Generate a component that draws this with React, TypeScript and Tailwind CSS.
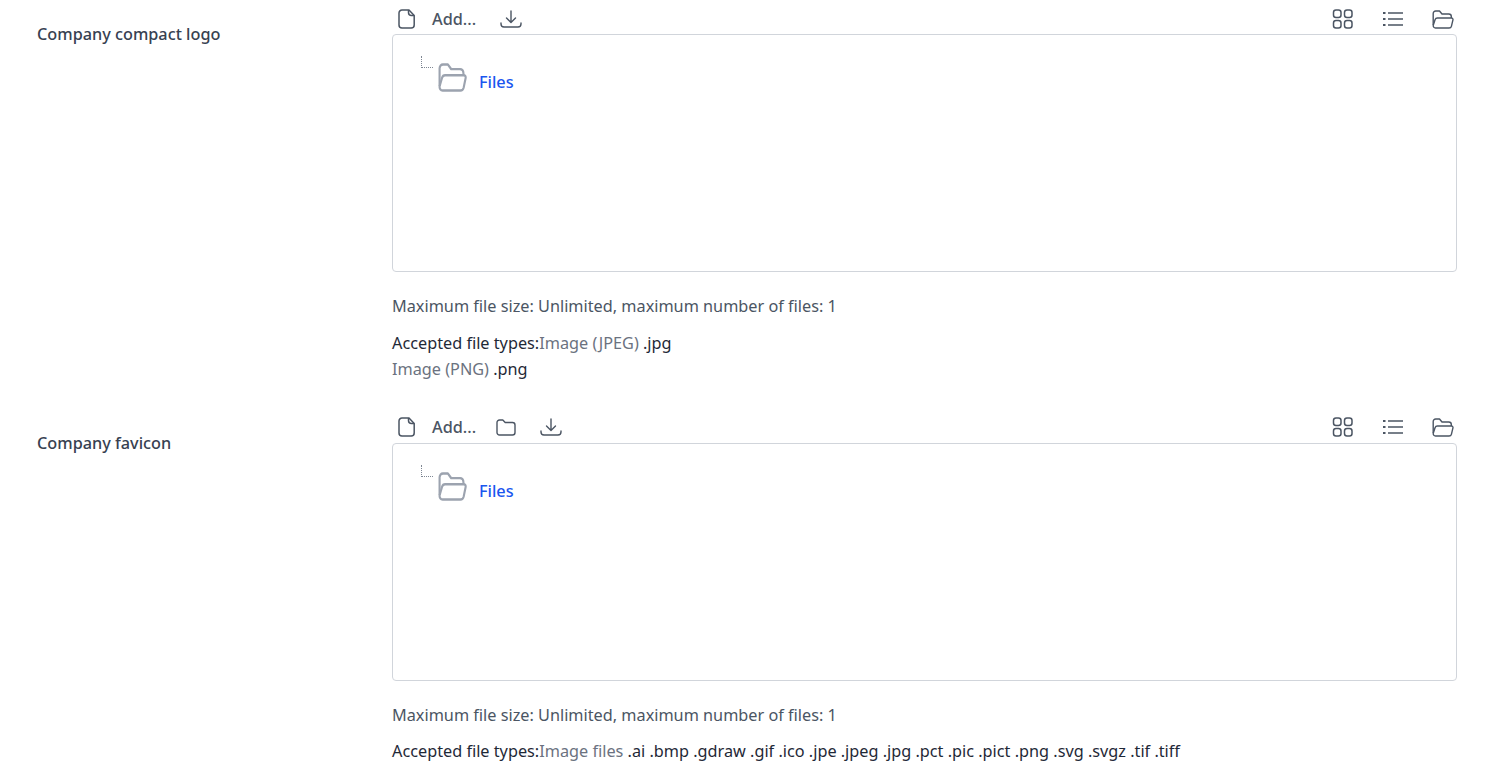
import React from "react";

const FileIcon = () => (
  <svg width="18" height="20" viewBox="0 0 18 20" fill="none" stroke="#4b5563" strokeWidth="1.5" strokeLinejoin="round">
    <path d="M4 1h7l5.200 5.500V16a3 3 0 0 1-3 3H4a3 3 0 0 1-3-3V4a3 3 0 0 1 3-3Z" />
    <path d="M10.500 1v2.500a3 3 0 0 0 3 3h2.700" />
  </svg>
);
const DownloadIcon = () => (
  <svg width="22" height="18" viewBox="0 0 22 18" fill="none" stroke="#4b5563" strokeWidth="1.4" strokeLinecap="round" strokeLinejoin="round">
    <path d="M11 1v11M6.500 8 11 12.500 15.500 8" />
    <path d="M1 13v1a3 3 0 0 0 3 3h14a3 3 0 0 0 3-3v-1" />
  </svg>
);
const FolderIcon = () => (
  <svg width="20" height="17" viewBox="0 0 20 17" fill="none" stroke="#4b5563" strokeWidth="1.4" strokeLinejoin="round">
    <path d="M1 3.500A2.500 2.500 0 0 1 3.500 1h3.300l2.400 2.500h7.300a2.500 2.500 0 0 1 2.500 2.500v7.500a2.500 2.500 0 0 1-2.500 2.500h-13A2.500 2.500 0 0 1 1 13.500Z" />
  </svg>
);
const GridIcon = () => (
  <svg width="22" height="20" viewBox="0 0 22 20" fill="none" stroke="#4b5563" strokeWidth="1.500">
    <rect x="1.500" y="1" width="7.500" height="7.500" rx="2.500" />
    <rect x="12.500" y="1" width="7.500" height="7.500" rx="2.500" />
    <rect x="1.500" y="11.500" width="7.500" height="7.500" rx="2.500" />
    <rect x="12.500" y="11.500" width="7.500" height="7.500" rx="2.500" />
  </svg>
);
const ListIcon = () => (
  <svg width="20" height="16" viewBox="0 0 20 16" fill="none" stroke="#4b5563" strokeWidth="1.600">
    <path d="M5 2h15M5 8h15M5 14h15" />
    <path d="M0 2h2.500M0 8h2.500M0 14h2.500" strokeWidth="2.200" />
  </svg>
);
const OpenFolder = ({ w, h, color, sw }: { w: number; h: number; color: string; sw: number }) => (
  <svg width={w} height={h} viewBox="0 0 22 19" preserveAspectRatio="none" fill="none" stroke={color} strokeWidth={sw} strokeLinejoin="round">
    <path d="M1.200 15V3.500A2.500 2.500 0 0 1 3.700 1h3.800l2.500 3h6.800a2.500 2.500 0 0 1 2.500 2.500V8" />
    <path d="M5.500 8h14a1.500 1.500 0 0 1 1.450 1.900l-1.500 6.300A2.500 2.500 0 0 1 17 18H3.500a2.300 2.300 0 0 1-2.250-2.800l1.800-5.500A2.500 2.500 0 0 1 5.500 8Z" />
  </svg>
);

function Uploader({ folderBtn, meta }: { folderBtn?: boolean; meta: React.ReactNode }) {
  return (
    <div className="w-[1065px]">
      <div className={`flex items-center justify-between pl-[6px] pr-[3px] h-[20px] ${folderBtn ? "mb-[6px]" : "mb-[5px]"}`}>
        <div className="flex items-center">
          <FileIcon />
          <span className="ml-[16px] text-[#4b5563] leading-5 font-medium">Add...</span>
          {folderBtn && (
            <span className="ml-[20px] flex">
              <FolderIcon />
            </span>
          )}
          <span className="ml-[24px] flex">
            <DownloadIcon />
          </span>
        </div>
        <div className="flex items-center gap-[29px]">
          <GridIcon />
          <ListIcon />
          <OpenFolder w={22} h={19} color="#4b5563" sw={1.4} />
        </div>
      </div>
      <div className="h-[238px] border border-[#d1d5db] rounded-[4px] bg-white pl-[28px] pt-[20px]">
        <div className="flex items-start">
          <span className="w-[12px] h-[12px] mt-[1px] border-l border-b border-dotted border-[#7f8793]" />
          <span className="ml-[5px] mt-[8px] flex">
            <OpenFolder w={29} h={29} color="#9ca3af" sw={1.6} />
          </span>
          <span className="ml-[12px] mt-[17px] text-[#1a56ef] leading-5 font-medium">Files</span>
        </div>
      </div>
      <p className="mt-[24px] leading-5 text-[#4b5563] font-[450]">Maximum file size: Unlimited, maximum number of files: 1</p>
      <div className={`${folderBtn ? "mt-[13px]" : "mt-[14px]"} leading-[26px] text-[#1f2937] font-[450]`}>{meta}</div>
    </div>
  );
}

export default function App() {
  return (
    <div className="w-[1487px] h-[777px] overflow-hidden bg-white text-[16.25px] font-['Noto_Sans','Open_Sans',sans-serif]">
      <div className="flex pl-[37px] pt-[9px]">
        <div className="w-[355px] pt-[15px] leading-5 text-[#374151] font-medium">Company compact logo</div>
        <Uploader
          meta={
            <>
              Accepted file types:<span className="text-[#6b7280]">Image (JPEG)</span> .jpg
              <br />
              <span className="text-[#6b7280]">Image (PNG)</span> .png
            </>
          }
        />
      </div>
      <div className="flex pl-[37px] pt-[35px]">
        <div className="w-[355px] pt-[16px] leading-5 text-[#374151] font-medium">Company favicon</div>
        <Uploader
          folderBtn
          meta={
            <>
              Accepted file types:<span className="text-[#6b7280]">Image files</span> .ai .bmp .gdraw .gif .ico .jpe .jpeg .jpg .pct .pic .pict .png .svg .svgz .tif .tiff
            </>
          }
        />
      </div>
    </div>
  );
}
